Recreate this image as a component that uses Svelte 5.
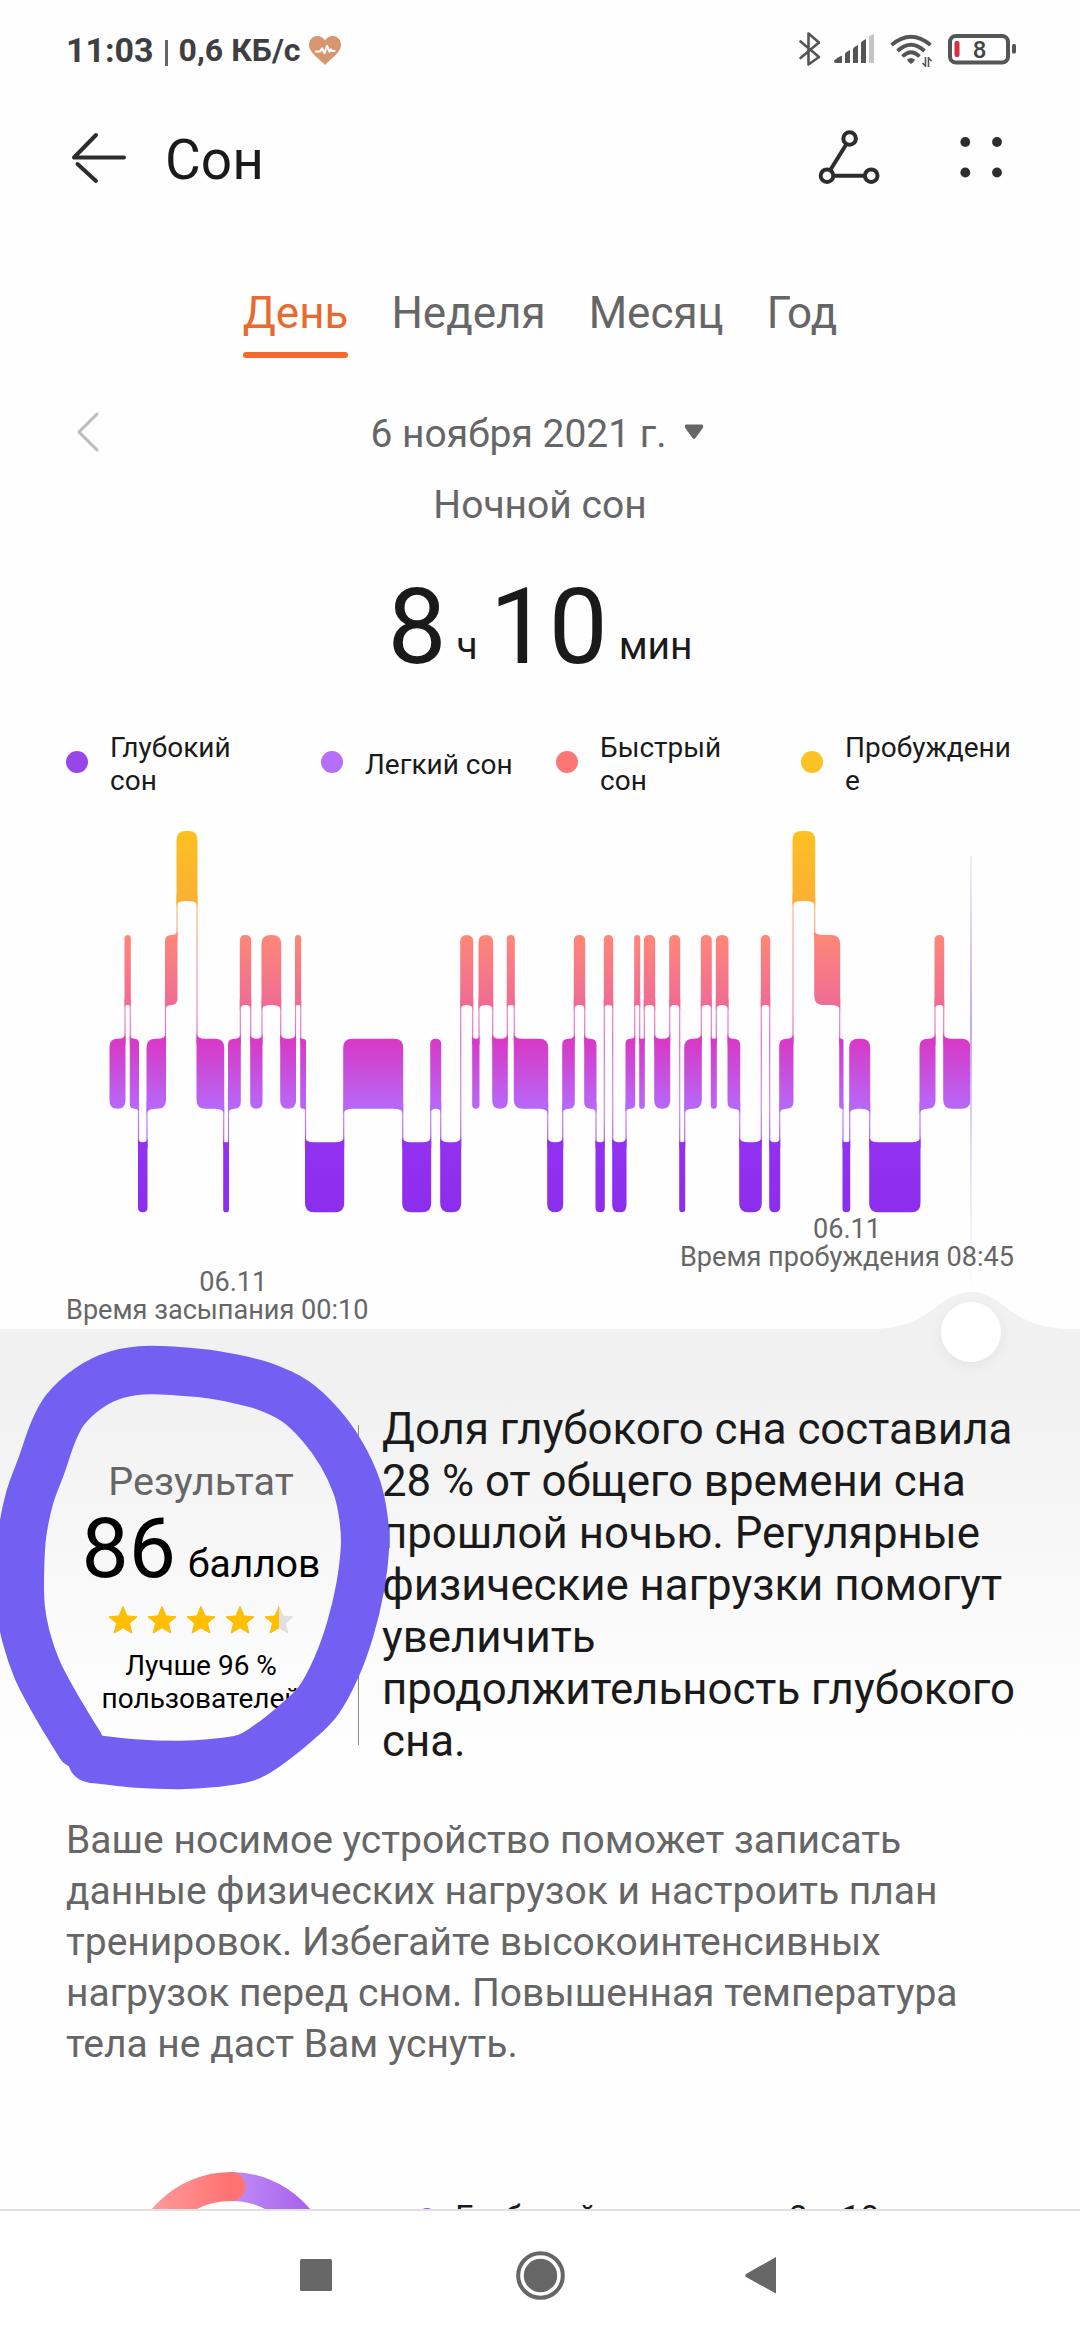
<script lang="ts">
  type Level = 'Y' | 'R' | 'L' | 'D';

  const tabs = ['День', 'Неделя', 'Месяц', 'Год'];
  let activeTab = $state('День');

  const legend = [
    { name: 'Глубокий сон', kind: 'deep' },
    { name: 'Легкий сон', kind: 'light' },
    { name: 'Быстрый сон', kind: 'rem' },
    { name: 'Пробуждение', kind: 'awake' }
  ];

  const LEVEL_TOP: Record<Level, number> = { Y: 11, R: 115, L: 218.7, D: 322.3 };
  const BAR = 70;
  const START = 110;

  // [stage, x where the stage ends]
  const stages: [Level, number][] = [
    ['L', 125], ['R', 130.3], ['L', 138.5], ['D', 147], ['L', 165.5], ['R', 177],
    ['Y', 197], ['L', 223.7], ['D', 228.5], ['L', 240.3], ['R', 250.7], ['L', 262],
    ['R', 280.7], ['L', 295.5], ['R', 300.7], ['L', 305.5], ['D', 343.7], ['L', 402.7],
    ['D', 430.7], ['L', 440.7], ['D', 460.7], ['R', 472.7], ['L', 479], ['R', 492.7],
    ['L', 507.3], ['R', 514.3], ['L', 547.7], ['D', 562.7], ['L', 574.3], ['R', 584.7],
    ['L', 596], ['D', 604.3], ['R', 612.7], ['D', 626], ['L', 634.7], ['R', 639.7],
    ['L', 644.3], ['R', 654.7], ['L', 669.7], ['R', 679.7], ['D', 684.7], ['L', 701.3],
    ['R', 711.3], ['L', 716.3], ['R', 728], ['L', 739.7], ['D', 761.3], ['R', 769.7],
    ['D', 779.7], ['L', 793], ['Y', 814.7], ['R', 839.7], ['L', 843], ['D', 849.7],
    ['L', 869.7], ['D', 920], ['L', 935], ['R', 943.7], ['L', 970]
  ];

  // Corners facing a connector flare out towards it, the others are rounded
  function bar(i: number) {
    const [level, end] = stages[i];
    const x0 = (i ? stages[i - 1][1] : START) - 0.5;
    const x1 = end + 0.5;
    const top = LEVEL_TOP[level];
    const bottom = top + BAR;
    const r = Math.min(9, (x1 - x0) / 2);
    const prev = i ? LEVEL_TOP[stages[i - 1][0]] : top;
    const next = i < stages.length - 1 ? LEVEL_TOP[stages[i + 1][0]] : top;
    const f = Math.min(r, 6);
    const tl = prev < top ? -f : r;
    const tr = next < top ? -f : r;
    const bl = prev > top ? -f : r;
    const br = next > top ? -f : r;
    return `M${x0} ${top + tl}Q${x0} ${top} ${x0 + r} ${top}L${x1 - r} ${top}Q${x1} ${top} ${x1} ${top + tr}` +
      `L${x1} ${bottom - br}Q${x1} ${bottom} ${x1 - r} ${bottom}L${x0 + r} ${bottom}Q${x0} ${bottom} ${x0} ${bottom - bl}Z`;
  }

  const bars = stages.map((_, i) => bar(i)).join('');

  const links = stages.slice(0, -1).map(([level, x], i) => {
    const a = LEVEL_TOP[level];
    const b = LEVEL_TOP[stages[i + 1][0]];
    return { x, y: Math.min(a, b) + BAR - 6, h: Math.abs(a - b) - BAR + 12 };
  });

  const marker = [
    [275, 1286], [400, 1300], [540, 1305], [640, 1299], [735, 1284], [800, 1248], [890, 1177],
    [955, 1112], [1008, 1015], [1050, 900], [1080, 775], [1095, 650], [1090, 560], [1070, 470],
    [1025, 373], [962, 285], [885, 213], [790, 168], [690, 143], [600, 129], [450, 120],
    [350, 134], [265, 175], [195, 240], [158, 310], [125, 405], [90, 500], [67, 610],
    [60, 720], [62, 830], [78, 920], [112, 1020], [160, 1112], [200, 1180], [240, 1245]
  ];

  function smooth(pts: number[][]) {
    let d = `M${pts[0]}`;
    for (let i = 0; i < pts.length - 1; i++) {
      const p0 = pts[i - 1] ?? pts[i];
      const p1 = pts[i];
      const p2 = pts[i + 1];
      const p3 = pts[i + 2] ?? p2;
      d += `C${p1[0] + (p2[0] - p0[0]) / 6} ${p1[1] + (p2[1] - p0[1]) / 6} ` +
        `${p2[0] - (p3[0] - p1[0]) / 6} ${p2[1] - (p3[1] - p1[1]) / 6} ${p2[0]} ${p2[1]}`;
    }
    return d;
  }

  const STAR = 'M15 1.5L19 11L29 11.8L21.400 18.200L23.800 28L15 22.800L6.200 28L8.600 18.200L1 11.800L11 11Z';
</script>

<div class="screen">
  <main>
    <div class="status">
      <span class="clock">11:03</span>
      <span class="sep"></span>
      <span class="speed">0,6 КБ/с</span>
      <svg class="heart" width="34" height="31" viewBox="0 0 34 31">
        <path d="M17 30C13 25 1 18 1 10C1 5 4.500 1 9 1C12.500 1 15.500 3 17 5.500C18.500 3 21.500 1 25 1C29.500 1 33 5 33 10C33 18 21 25 17 30Z" fill="#d6976f" />
        <path d="M8 16.500H12L14 13.500L16.500 18L19 11L21.500 16.500L23 14.500L24 16H26.500" fill="none" stroke="#fff" stroke-width="2.200" stroke-linejoin="round" stroke-linecap="round" />
      </svg>
      <svg class="icons" width="222" height="40" viewBox="796 30 222 40">
        <path d="M800.500 41.500L819 57L808.500 64.500V33.500L819 42.500L800.500 58" fill="none" stroke="#555" stroke-width="2.600" stroke-linejoin="round" stroke-linecap="round" />
        <g fill="#555">
          <path d="M834 61Q834 59.500 842 55.500V63H836Q834 63 834 61Z" />
          <path d="M845 54Q845 52.500 850 50V63H845Z" />
          <path d="M853 49Q853 47.500 858 45V63H853Z" />
          <path d="M861 43Q861 41.500 866 39V63H861Z" />
          <path d="M869 37Q869 36 874 34V63H869Z" fill="#c4c4c4" />
          <path d="M907 59.500Q911 56.500 915 59.500Q913.500 63 911 64Q908.500 63 907 59.500Z" />
        </g>
        <g fill="none" stroke="#555" stroke-width="3.800">
          <path d="M891.500 45Q911 28.500 930.500 45" />
          <path d="M897.500 51Q911 38.500 924.500 51" />
          <path d="M902.500 56.500Q911 48 919.500 56.500" />
          <path d="M925.500 57V67M928.500 57V67M922.500 63L925 65.500M929 58.500L931.500 61" stroke-width="1.600" />
        </g>
        <rect x="950" y="36" width="58" height="26.500" rx="6" fill="none" stroke="#555" stroke-width="4" />
        <rect x="1012" y="44" width="4" height="9.500" rx="1.500" fill="#555" />
        <rect x="954.500" y="41" width="5" height="16" rx="2" fill="#d32f3f" />
        <text x="979.500" y="57.600" text-anchor="middle">8</text>
      </svg>
    </div>

    <header>
      <svg width="60" height="56" viewBox="70 128 60 56" fill="none" stroke="#2d2d2d" stroke-width="4" stroke-linecap="round" stroke-linejoin="round">
        <path d="M96 134L74 156.500H124M77.500 163L96 180" />
      </svg>
      <h1>Сон</h1>
      <svg class="share" width="64" height="60" viewBox="817 126 64 60" fill="none" stroke="#2d2d2d" stroke-width="4">
        <circle cx="849.600" cy="137.500" r="6.300" />
        <circle cx="827" cy="174.700" r="6.300" />
        <circle cx="871.200" cy="174.700" r="6.300" />
        <path d="M846.500 143L830.300 169M833.500 174.700H865" />
      </svg>
      <svg width="44" height="44" viewBox="959 134 44 44" fill="#2d2d2d">
        <circle cx="965.300" cy="141" r="4.900" />
        <circle cx="997" cy="141" r="4.900" />
        <circle cx="965.300" cy="171.500" r="4.900" />
        <circle cx="997" cy="171.500" r="4.900" />
      </svg>
    </header>

    <nav class="tabs">
      {#each tabs as tab}
        <button class:active={tab === activeTab} onclick={() => (activeTab = tab)}>{tab}</button>
      {/each}
    </nav>

    <div class="date-row">
      <svg width="24" height="42" viewBox="0 0 24 42" fill="none" stroke="#bcbcbc" stroke-width="3" stroke-linecap="round" stroke-linejoin="round">
        <path d="M21 3L3 21L21 39" />
      </svg>
      <div class="date">
        <span>6 ноября 2021 г.</span>
        <svg width="20" height="16" viewBox="0 0 20 16"><path d="M2 0.500H18Q20 1.500 18.800 4L11.500 14Q10 16 8.500 14L1.200 4Q0 1.500 2 0.500Z" fill="#666" /></svg>
      </div>
    </div>
    <div class="subtitle">Ночной сон</div>

    <div class="total">
      <b>8</b><small class="hours">ч</small><b>10</b><small>мин</small>
    </div>

    <div class="legend">
      {#each legend as item}
        <div class="legend-item {item.kind}">
          <i></i>
          <span>{item.name}</span>
        </div>
      {/each}
    </div>

    <section class="chart">
      <svg width="1080" height="394" viewBox="0 0 1080 394">
        <defs>
          <linearGradient id="sleep" gradientUnits="userSpaceOnUse" x1="0" y1="11" x2="0" y2="393">
            <stop offset="0" stop-color="#ffc021" />
            <stop offset="0.183" stop-color="#fbb034" />
            <stop offset="0.272" stop-color="#ff8777" />
            <stop offset="0.455" stop-color="#ee6c94" />
            <stop offset="0.550" stop-color="#d73ac6" />
            <stop offset="0.725" stop-color="#b768f8" />
            <stop offset="0.815" stop-color="#9331f1" />
            <stop offset="1" stop-color="#8b2eec" />
          </linearGradient>
        </defs>
        <g fill="url(#sleep)">
          <path d={bars} />
          {#each links as link}
            <rect x={link.x - 0.6} y={link.y} width="1.2" height={link.h} opacity="0.75" />
          {/each}
        </g>
      </svg>
      <div class="cursor"></div>
      <div class="times">
        <div class="asleep">
          <p class="day">06.11</p>
          <p>Время засыпания 00:10</p>
        </div>
        <div>
          <p>06.11</p>
          <p>Время пробуждения 08:45</p>
        </div>
      </div>
      <svg class="bump" width="200" height="110" viewBox="0 0 200 110">
        <path d="M0 39C62 39 66 2 100 2C134 2 138 39 200 39V42H0Z" fill="#f1f1f1" />
      </svg>
      <div class="knob"></div>
    </section>

    <section class="score">
      <div class="result">
        <div class="result-title">Результат</div>
        <div class="points"><b>86</b><span>баллов</span></div>
        <div class="stars">
          {#each [1, 1, 1, 1, 0.5] as fill}
            <svg width="30" height="30" viewBox="0 0 30 30">
              <path d={STAR} fill="#e0e0e0" stroke="#e0e0e0" stroke-linejoin="round" />
              <path class:half={fill < 1} d={STAR} fill="#ffbf00" stroke="#ffbf00" stroke-linejoin="round" />
            </svg>
          {/each}
        </div>
        <p>Лучше 96 %<br />пользователей</p>
      </div>
      <div class="rule"></div>
      <p class="advice">Доля глубокого сна составила 28 % от общего времени сна прошлой ночью. Регулярные физические нагрузки помогут увеличить продолжительность глубокого сна.</p>
      <svg class="marker" width="400" height="480" viewBox="0 0 1200 1440">
        <path d={smooth(marker)} fill="none" stroke="#735ff2" stroke-width="145" stroke-linecap="round" stroke-linejoin="round" />
      </svg>
    </section>

    <p class="hint">Ваше носимое устройство поможет записать данные физических нагрузок и настроить план тренировок. Избегайте высокоинтенсивных нагрузок перед сном. Повышенная температура тела не даст Вам уснуть.</p>

    <section class="breakdown">
      <svg width="208" height="208" viewBox="127 2171 208 208">
        <defs>
          <linearGradient id="violet" x1="0" x2="1"><stop offset="0" stop-color="#c08cf8" /><stop offset="1" stop-color="#a55ce8" /></linearGradient>
          <linearGradient id="coral" x1="0" x2="1"><stop offset="0" stop-color="#ff9f9f" /><stop offset="1" stop-color="#ff7272" /></linearGradient>
        </defs>
        <path d="M231 2186.500A88.500 88.500 0 0 1 319.500 2275" fill="none" stroke="url(#violet)" stroke-width="29" />
        <path d="M142.500 2275A88.500 88.500 0 0 1 231 2186.500" fill="none" stroke="url(#coral)" stroke-width="29" stroke-linecap="round" />
      </svg>
      <i></i>
      <span class="stage-name">Глубокий сон</span>
      <span>2 ч 18 мин</span>
    </section>
  </main>

  <footer>
    <svg width="1080" height="129" viewBox="0 2211 1080 129" fill="#666">
      <rect x="300" y="2259" width="32" height="32" rx="1.500" />
      <circle cx="540.500" cy="2275.500" r="16.700" />
      <circle cx="540.500" cy="2275.500" r="22.300" fill="none" stroke="#666" stroke-width="4" />
      <path d="M776 2257V2293.500L746 2277Q744.500 2275.500 746 2274Z" />
    </svg>
  </footer>
</div>

<style>
  :global(body) {
    background: #fefefe;
  }

  .screen {
    width: 1080px;
    height: 2340px;
    overflow: hidden;
    background: #fefefe;
    color: #1a1a1a;
    font-family: Roboto, "Noto Sans", sans-serif;
  }

  main {
    height: 2209px;
    overflow: hidden;
  }

  p,
  h1 {
    margin: 0;
    font-weight: 400;
  }

  .status {
    display: flex;
    align-items: center;
    height: 100px;
    padding: 0 62px 0 66px;
    color: #3f3f3f;
    font-weight: 700;
  }

  .clock {
    font-size: 34px;
  }

  .sep {
    width: 3px;
    height: 26px;
    margin: 5px 11px 0 11px;
    background: #666;
  }

  .speed {
    font-size: 32px;
  }

  .heart {
    margin-left: 8px;
  }

  .icons {
    margin-left: auto;
  }

  .icons text {
    font-size: 24px;
    font-weight: 500;
    fill: #444;
  }

  header {
    display: flex;
    align-items: center;
    height: 113px;
    padding: 0 77px 0 70px;
  }

  h1 {
    margin: 7px 0 0 35px;
    font-size: 55px;
  }

  .share {
    margin: 0 78px 0 auto;
  }

  .tabs {
    display: flex;
    justify-content: center;
    gap: 43px;
    margin-top: 74px;
  }

  .tabs button {
    padding: 0 0 13px;
    border: 0;
    background: none;
    color: #666;
    font: 44px/52px Roboto, sans-serif;
  }

  .tabs .active {
    color: #e96a2e;
    position: relative;
  }

  .tabs .active::after {
    content: '';
    position: absolute;
    left: 0;
    right: 0;
    bottom: -6px;
    height: 6px;
    border-radius: 3px;
    background: #f36a2b;
  }

  .date-row {
    display: grid;
    grid-template-columns: 24px 1fr 24px;
    align-items: center;
    height: 46px;
    margin-top: 59px;
    padding: 0 76px;
  }

  .date-row > svg {
    margin-bottom: 4px;
  }

  .date {
    display: flex;
    justify-content: center;
    align-items: center;
    gap: 18px;
    padding-right: 5px;
    color: #666;
    font-size: 39px;
    line-height: 46px;
  }

  .date svg {
    margin-bottom: 5px;
  }

  .subtitle {
    margin-top: 25px;
    color: #666;
    font-size: 39px;
    line-height: 46px;
    text-align: center;
  }

  .total {
    display: flex;
    justify-content: center;
    align-items: baseline;
    height: 120px;
    margin-top: 40px;
    line-height: 120px;
  }

  .total b {
    font-size: 105px;
    font-weight: 400;
  }

  .total small {
    position: relative;
    top: -4px;
    margin-left: 11px;
    font-size: 39px;
  }

  .total .hours {
    margin-left: 10px;
    margin-right: 12px;
  }

  .legend {
    display: flex;
    height: 66px;
    margin-top: 43px;
    padding: 0 66px;
  }

  .legend-item {
    display: flex;
    align-items: center;
    gap: 22px;
    width: 245px;
    font-size: 28px;
    line-height: 33px;
  }

  .legend-item i {
    flex: none;
    width: 22px;
    height: 22px;
    margin-bottom: 4px;
    border-radius: 50%;
  }

  .legend-item span {
    max-width: 168px;
    overflow-wrap: anywhere;
  }

  .deep { width: 255px; }
  .deep span { max-width: 140px; }
  .light { width: 235px; }
  .rem span { max-width: 140px; }
  .awake { width: 212px; }
  .deep i { background: #9747e8; }
  .light i { background: #b56ff8; }
  .rem i { background: #fb7676; }
  .awake i { background: #fbc225; }

  .chart {
    position: relative;
    height: 509px;
    margin-top: 23px;
  }

  .chart > svg {
    display: block;
  }

  .times {
    position: relative;
    display: flex;
    justify-content: space-between;
    padding: 1px 66px 0;
    color: #666;
    font-size: 27.1px;
    line-height: 28px;
    text-align: center;
  }

  .asleep {
    margin-top: 53px;
  }

  .asleep .day {
    padding-left: 32px;
  }

  .cursor {
    position: absolute;
    left: 970px;
    top: 36px;
    width: 2px;
    height: 436px;
    background: linear-gradient(#f1effa, #c3a8ec 40%, #e4ddf8 68%, #f3f0fb 85%, #fefefe);
  }

  .chart > .bump {
    position: absolute;
    left: 871px;
    top: 470px;
  }

  .knob {
    position: absolute;
    left: 941px;
    top: 482px;
    width: 60px;
    height: 60px;
    border-radius: 50%;
    background: #fff;
    box-shadow: 0 4px 14px rgba(0, 0, 0, 0.06);
    z-index: 1;
  }

  .score {
    position: relative;
    display: flex;
    height: 411px;
    padding: 74px 0 0 66px;
    background: linear-gradient(#f1f1f1 13%, #f6f6f6 38%, #fbfbfb 65%, #fefefe 87%);
  }

  .result {
    width: 270px;
    padding-top: 56px;
    text-align: center;
    color: #000;
  }

  .result-title {
    color: #666;
    font-size: 39.5px;
    line-height: 46px;
  }

  .points {
    display: flex;
    justify-content: center;
    align-items: baseline;
    height: 96px;
    line-height: 96px;
    margin-top: -4px;
  }

  .points b {
    font-size: 84px;
    font-weight: 400;
  }

  .points span {
    margin-left: 12px;
    font-size: 39px;
  }

  .stars {
    display: flex;
    justify-content: center;
    gap: 9px;
    height: 30px;
    margin-top: 8px;
  }

  .half {
    clip-path: inset(0 50% 0 0);
  }

  .result p {
    margin-top: 14px;
    font-size: 28px;
    line-height: 33px;
  }

  .rule {
    width: 1px;
    height: 320px;
    margin: 22px 23px 0 22px;
    background: #8c8c8c;
  }

  .advice {
    width: 636px;
    font-size: 43.8px;
    line-height: 52px;
  }

  .marker {
    position: absolute;
    left: 0;
    top: 1px;
  }

  .hint {
    width: 930px;
    margin-top: 1px;
    padding-left: 66px;
    color: #666;
    font-size: 39px;
    line-height: 51px;
  }

  .breakdown {
    display: flex;
    align-items: flex-start;
    margin-top: 101px;
    padding-left: 127px;
    font-size: 33px;
    line-height: 40px;
  }

  .breakdown i {
    width: 18px;
    height: 18px;
    margin: 37px 19px 0 83px;
    border-radius: 50%;
    background: #9747e8;
  }

  .breakdown span {
    margin-top: 27px;
  }

  .breakdown .stage-name {
    width: 334px;
  }

  footer {
    position: relative;
    border-top: 2px solid #e0e0e0;
    background: #fff;
  }

  footer svg {
    display: block;
  }
</style>
